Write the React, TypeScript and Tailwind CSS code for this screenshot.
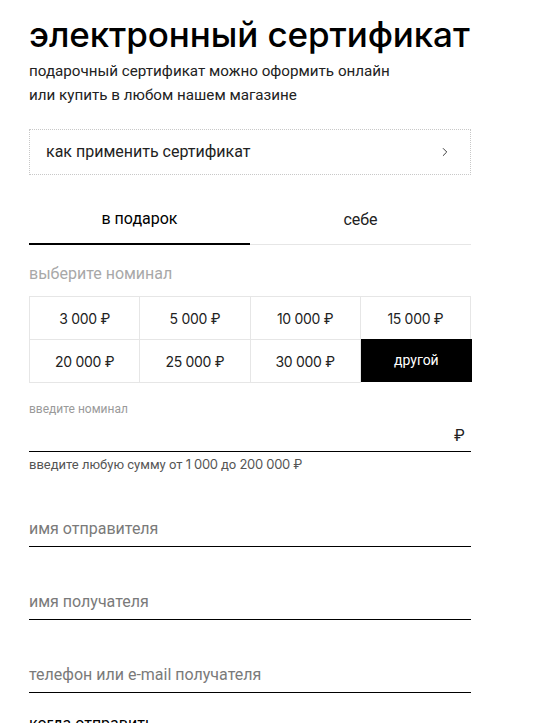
import { ChevronRight } from 'lucide-react'

const amounts = ['3 000 ₽', '5 000 ₽', '10 000 ₽', '15 000 ₽', '20 000 ₽', '25 000 ₽', '30 000 ₽']

const fields = ['имя отправителя', 'имя получателя', 'телефон или e-mail получателя']

const App = () => {
  return (
    <div className="min-h-[723px] bg-white font-['Roboto',sans-serif] text-[#1a1a1a]">
      <div className="w-[442px] ml-[29px] pt-[14px]">
        <h1 className="font-['Inter',sans-serif] text-[35px] leading-[40px] font-medium tracking-[-0.1px] whitespace-nowrap text-black">
          электронный сертификат
        </h1>
        <p className="mt-[5px] text-[15.2px] leading-[24px] text-[#222]">
          подарочный сертификат можно оформить онлайн
          <br />
          или купить в любом нашем магазине
        </p>

        {/* как применить */}
        <button className="mt-[22px] w-full h-[46px] border border-dotted border-[#c8c8c8] flex items-center justify-between pl-[16px] pr-[18px] text-[16px] text-[#222]">
          <span>как применить сертификат</span>
          <ChevronRight size={14} strokeWidth={1.5} />
        </button>

        {/* tabs */}
        <div className="mt-[20px] grid grid-cols-2 items-end">
          <div className="h-[50px] flex items-center justify-center border-b-2 border-black text-[16px] text-black">
            в подарок
          </div>
          <div className="h-[49px] flex items-center justify-center border-b border-[#e6e6e6] text-[16px] text-[#222] pb-[1px]">
            себе
          </div>
        </div>

        <p className="mt-[17px] text-[16px] leading-[24px] text-[#a8a8a8]">выберите номинал</p>

        <div className="mt-[10px] grid grid-cols-4 border-t border-l border-[#e6e6e6] font-['Inter',sans-serif] text-[14px]">
          {amounts.map((a) => (
            <div
              key={a}
              className="h-[43px] flex items-center justify-center border-r border-b border-[#e6e6e6] text-[#222] tracking-[-0.3px]"
            >
              {a}
            </div>
          ))}
          <div className="h-[43px] flex items-center justify-center bg-black text-white text-[14px] font-['Roboto',sans-serif] -mt-px -mr-px">
            другой
          </div>
        </div>

        <p className="mt-[18px] text-[12px] leading-[16px] text-[#9a9a9a]">введите номинал</p>
        <div className="h-[35px] border-b border-black flex items-center justify-end pr-[6px] pt-[2px]">
          <span className="font-['Inter',sans-serif] text-[16px] text-[#222]">₽</span>
        </div>
        <p className="mt-[4px] text-[13px] leading-[16px] text-[#555]">
          введите любую сумму от <span className="font-['Inter',sans-serif] tracking-[-0.3px]">1 000</span> до{' '}
          <span className="font-['Inter',sans-serif] tracking-[-0.3px]">200 000 ₽</span>
        </p>

        <div className="mt-[44px] flex flex-col gap-[43px]">
          {fields.map((f) => (
            <div key={f} className="border-b border-black pb-[5px]">
              <span className="block text-[16px] leading-[24px] text-[#7a7a7a]">{f}</span>
            </div>
          ))}
        </div>

        <p className="mt-[19px] text-[16px] leading-[24px] text-black">когда отправить</p>
      </div>
    </div>
  )
}

export default App
